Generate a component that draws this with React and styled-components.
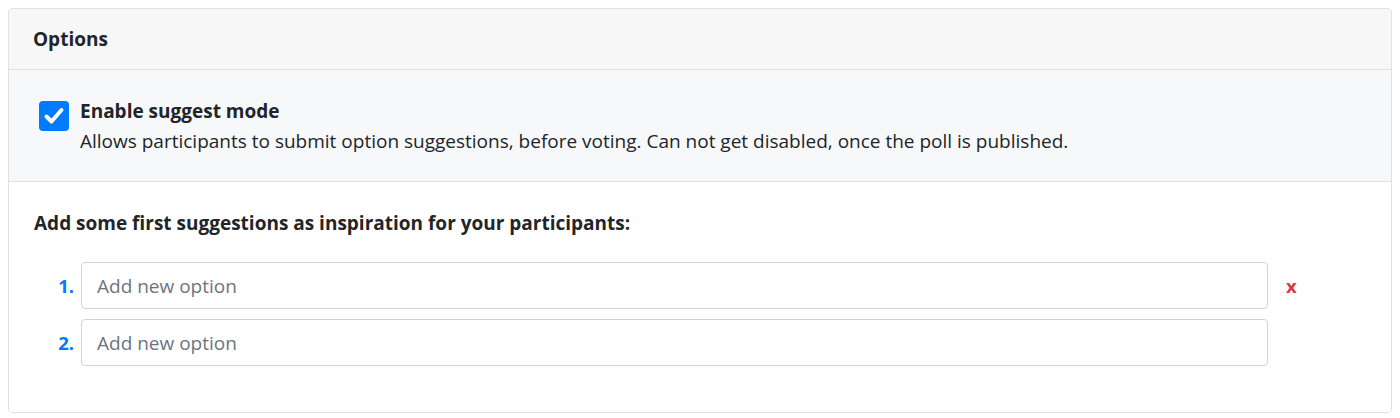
import React from 'react';
import styled, { createGlobalStyle } from 'styled-components';

const GlobalStyle = createGlobalStyle`
  body {
    margin: 8px;
    background: #fff;
    font-family: 'Open Sans', 'Noto Sans', sans-serif;
    color: #212529;
  }
`;

const Card = styled.div`
  border: 1px solid #dfe1e4;
  border-radius: 4px;
  overflow: hidden;
`;

const CardHeader = styled.div`
  background: #f7f7f8;
  border-bottom: 1px solid #dfe1e4;
  padding: 16px 24px;
  font-size: 19px;
  font-weight: 700;
  line-height: 28px;
`;

const Section = styled.div`
  background: ${p => (p.muted ? '#f7f8fa' : '#fff')};
  border-bottom: ${p => (p.last ? 'none' : '1px solid #dfe1e4')};
  padding: ${p => p.pad};
`;

const CheckRow = styled.label`
  display: flex;
  align-items: flex-start;
  gap: 11px;
  padding-left: 5px;
`;

const Box = styled.span`
  flex: none;
  width: 30px;
  height: 30px;
  margin-top: 5px;
  border-radius: 4px;
  background: #007bff;
  display: flex;
  align-items: center;
  justify-content: center;
`;

const CheckText = styled.div`
  display: flex;
  flex-direction: column;
  font-size: 19px;
  line-height: 30px;
`;

const Strong = styled.span`
  font-weight: 700;
`;

const Title = styled.div`
  font-size: 19px;
  font-weight: 700;
  line-height: 28px;
  margin-bottom: 25px;
`;

const List = styled.ol`
  list-style: none;
  margin: 0;
  padding: 0;
  display: flex;
  flex-direction: column;
  gap: 10px;
`;

const Item = styled.li`
  display: flex;
  align-items: center;
`;

const Num = styled.span`
  width: 47px;
  padding-right: 7px;
  box-sizing: border-box;
  text-align: right;
  color: #007bff;
  font-weight: 700;
  font-size: 18.5px;
`;

const Input = styled.input`
  flex: none;
  width: 1187px;
  height: 47px;
  box-sizing: border-box;
  border: 1px solid #ced4da;
  border-radius: 4px;
  padding: 0 15px;
  font-family: inherit;
  font-size: 19px;
  color: #495057;
  &::placeholder {
    color: #6c757d;
  }
`;

const Remove = styled.span`
  margin-left: 18px;
  color: #dc3545;
  font-weight: 700;
  font-size: 18.5px;
`;

export default function App() {
  const options = [1, 2];
  return (
    <>
      <GlobalStyle />
      <Card>
        <CardHeader>Options</CardHeader>
        <Section muted pad="26px 25px 25px">
          <CheckRow>
            <Box>
              <svg width="22" height="22" viewBox="0 0 22 22">
                <path d="M3.5 11.5l5 5L18.5 5" fill="none" stroke="#fff" strokeWidth="4" strokeLinecap="round" strokeLinejoin="round" />
              </svg>
            </Box>
            <CheckText>
              <Strong>Enable suggest mode</Strong>
              <span>Allows participants to submit option suggestions, before voting. Can not get disabled, once the poll is published.</span>
            </CheckText>
          </CheckRow>
        </Section>
        <Section last pad="27px 25px 46px">
          <Title>Add some first suggestions as inspiration for your participants:</Title>
          <List>
            {options.map(n => (
              <Item key={n}>
                <Num>{n}.</Num>
                <Input placeholder="Add new option" />
                {n === 1 && <Remove>x</Remove>}
              </Item>
            ))}
          </List>
        </Section>
      </Card>
    </>
  );
}
